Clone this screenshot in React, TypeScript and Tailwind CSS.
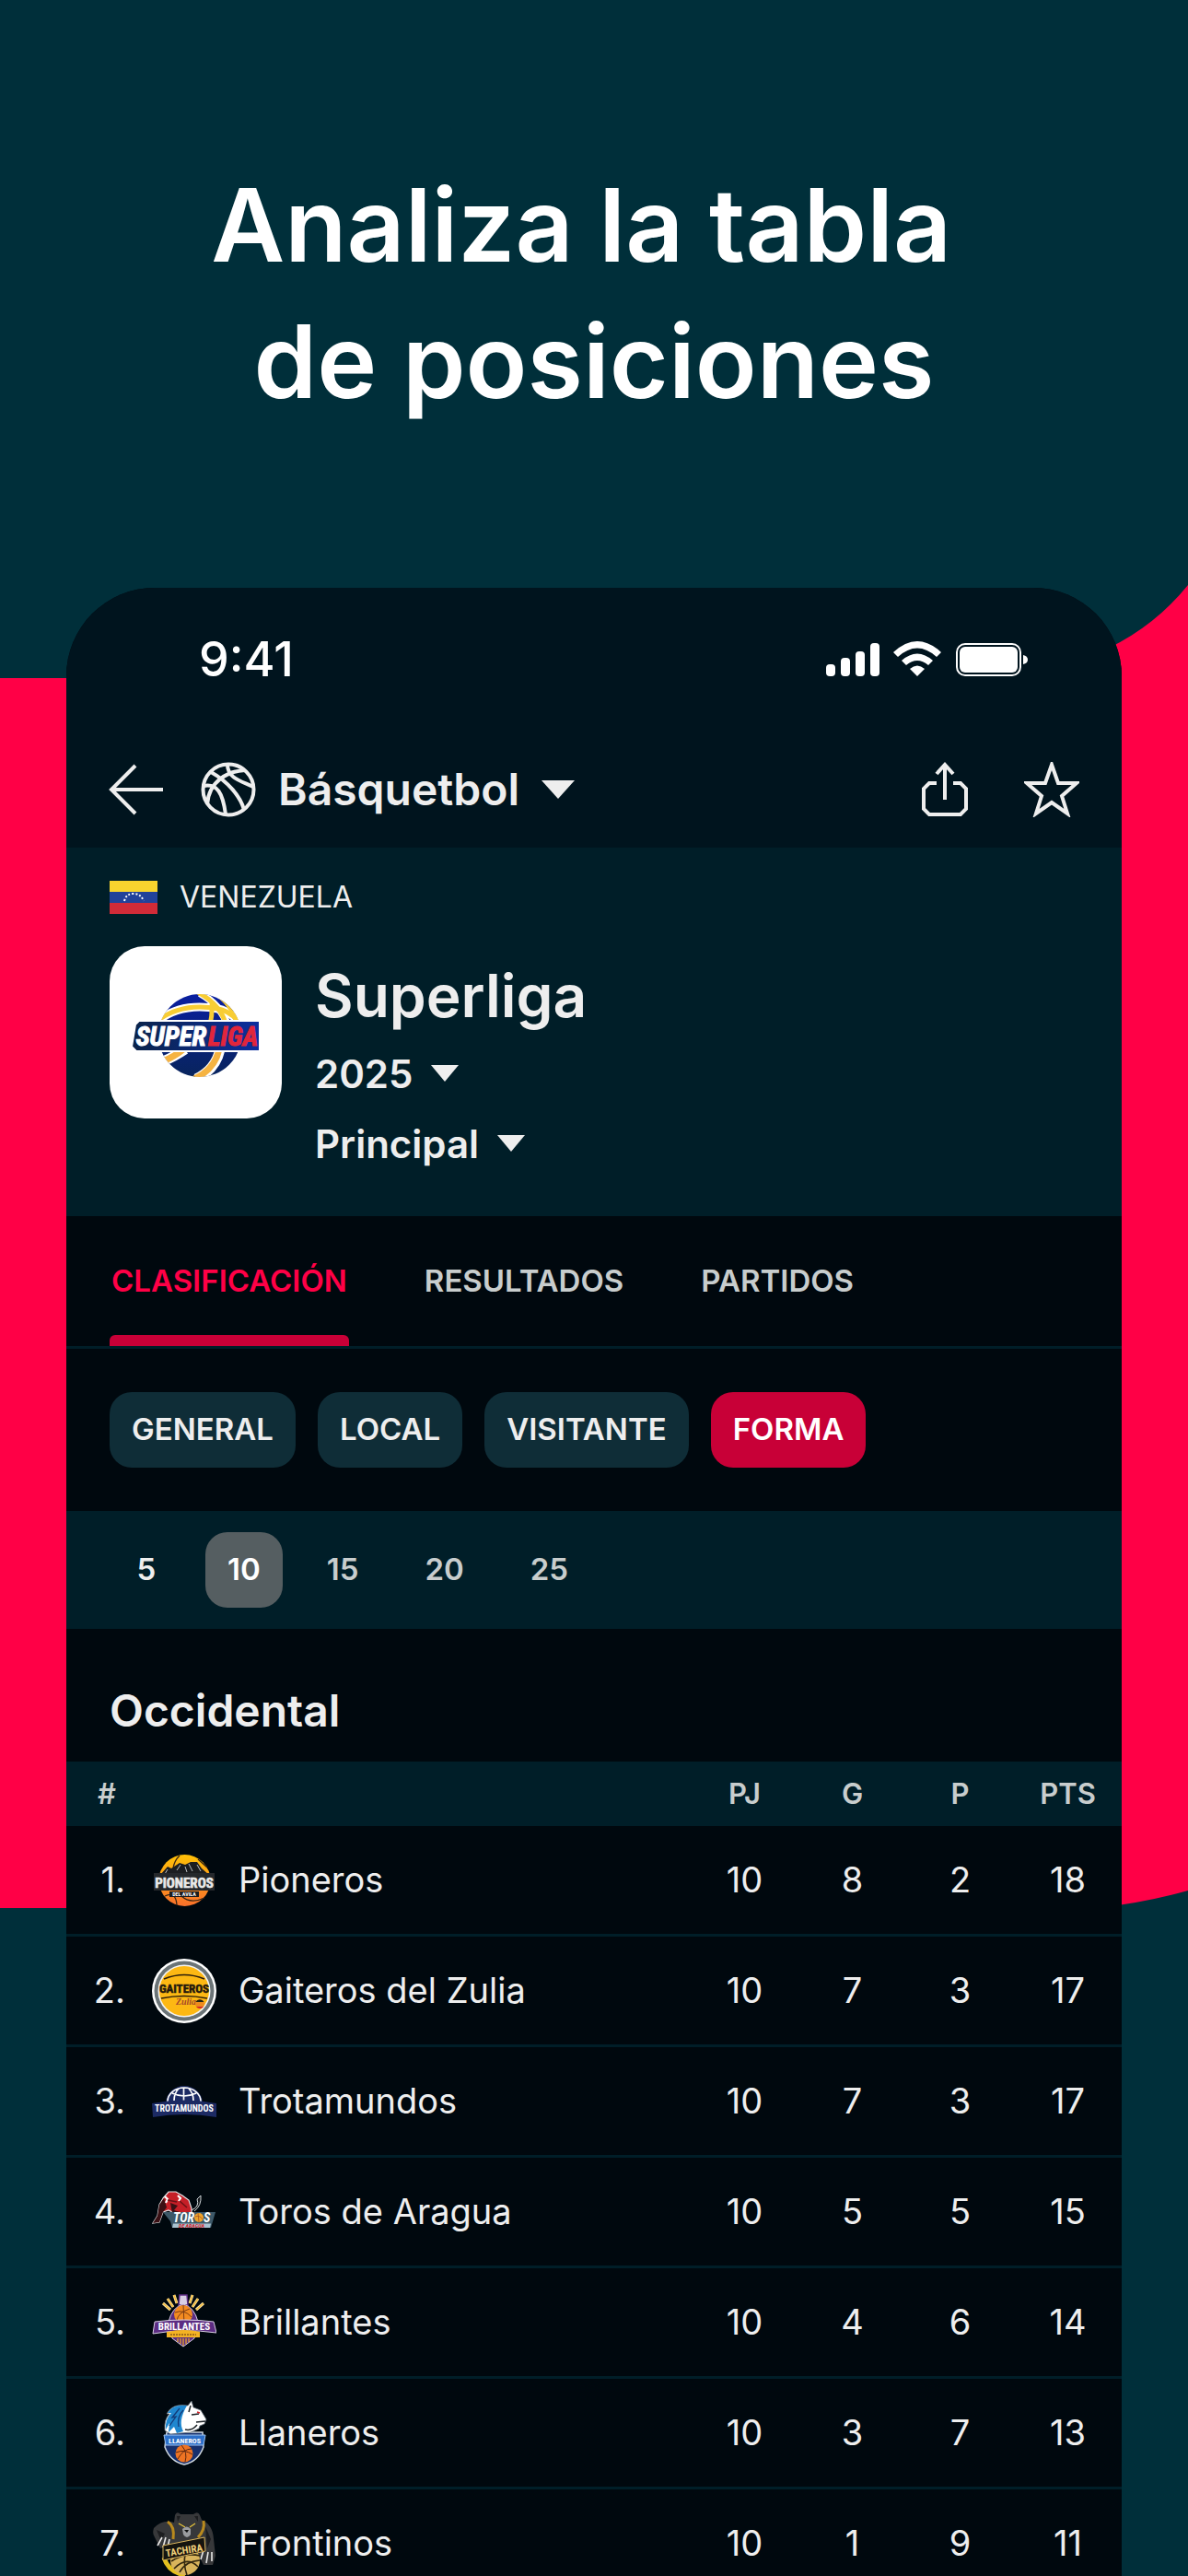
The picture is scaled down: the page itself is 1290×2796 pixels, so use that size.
import React, { useState } from 'react';
import clsx from 'clsx';

interface Team {
    name: string;
    played: number;
    won: number;
    lost: number;
    points: number;
    Logo: () => React.JSX.Element;
}

const LOGO_FONT = '"Liberation Sans Narrow", "Roboto Condensed", "Liberation Sans", sans-serif';

const TABS = ['Clasificación', 'Resultados', 'Partidos'];
const FILTERS = ['General', 'Local', 'Visitante', 'Forma'];
const PERIODS = [5, 10, 15, 20, 25];

function SuperligaLogo() {
    return (
        <svg viewBox="0 0 187 187" className="size-full" aria-label="Superliga">
            <defs>
                <linearGradient id="superBall" x1="0" y1="0" x2="0" y2="1">
                    <stop offset="0" stopColor="#0a1fa0" />
                    <stop offset="1" stopColor="#08245c" />
                </linearGradient>
                <linearGradient id="superBanner" x1="0" y1="0" x2="1" y2="0">
                    <stop offset="0" stopColor="#0b2348" />
                    <stop offset="1" stopColor="#0c2ea0" />
                </linearGradient>
                <clipPath id="superClip">
                    <circle cx="98" cy="97" r="45" />
                </clipPath>
            </defs>
            <circle cx="98" cy="97" r="45" fill="url(#superBall)" />
            <g clipPath="url(#superClip)" fill="none">
                <path d="M52 81C70 67 92 63 118 68 128 70 136 76 144 86" stroke="#fff" strokeWidth="9" />
                <path d="M98 51C114 60 124 72 129 88" stroke="#fff" strokeWidth="8" />
                <path d="M52 81C70 67 92 63 118 68 128 70 136 76 144 86" stroke="#f8cd34" strokeWidth="5" />
                <path d="M96 50C114 60 124 72 127 88M112 49C126 58 134 68 138 84M111 60Q112 72 109 86" stroke="#f8cd34" strokeWidth="5" />
                <path d="M60 124Q70 120 82 112M120 112Q115 134 94 144" stroke="#fff" strokeWidth="11" />
                <path d="M58 125Q70 120 80 112M119 112Q114 134 92 144" stroke="#f5b342" strokeWidth="7" />
            </g>
            <path d="M32 81H163V114H29L24 109 28 85Z" fill="url(#superBanner)" stroke="#fff" strokeWidth="2" />
            <g fontFamily={LOGO_FONT} fontSize="29" fontWeight="700" fontStyle="italic">
                <text x="105" y="108" textAnchor="end" fill="#fff" stroke="#fff" strokeWidth="1">SUPER</text>
                <text x="107" y="108" fill="#e0263c" stroke="#e0263c" strokeWidth="1">LIGA</text>
            </g>
        </svg>
    );
}

function PionerosLogo() {
    return (
        <svg viewBox="0 0 70 70" className="size-[70px]">
            <defs>
                <linearGradient id="pioBall" x1="0" y1="0" x2="0" y2="1">
                    <stop offset="0" stopColor="#ffc107" />
                    <stop offset="1" stopColor="#f9702b" />
                </linearGradient>
            </defs>
            <circle cx="35.5" cy="35" r="28" fill="url(#pioBall)" />
            <path d="M30 8Q24 14 23 22M50 12 60 21M14 52Q26 46 27 62M32 52Q42 61 57 54" stroke="#3a2513" strokeWidth="1.3" fill="none" />
            <path d="M9 29 17 20 21 22 30 16 36 18 42 15 49 15 54 22 62 29Z" fill="#1b1d20" />
            <path d="M17 23 14 28M31 18 27 24M40 17 44 25M49 18 53 25M36 20 38 26" stroke="#b9bdc1" strokeWidth="1" />
            <path d="M2 27H68V46H2Z" fill="#25282c" />
            <text x="35" y="43" textAnchor="middle" fontFamily={LOGO_FONT} fontSize="15" fontWeight="700" fill="#e9e9e9" stroke="#e9e9e9" strokeWidth=".6">PIONEROS</text>
            <path d="M19 47H51V53H19Z" fill="#1b1d20" />
            <text x="35" y="52" textAnchor="middle" fontFamily={LOGO_FONT} fontSize="6" fontWeight="700" fill="#fff">DEL AVILA</text>
        </svg>
    );
}

function GaiterosLogo() {
    return (
        <svg viewBox="0 0 70 70" className="size-[70px]">
            <circle cx="35" cy="35" r="35" fill="#fff" />
            <circle cx="35" cy="35" r="32.5" fill="#6b7477" />
            <circle cx="35" cy="35" r="28.5" fill="#f4f4f4" />
            <circle cx="35" cy="35" r="27" fill="#fdb813" />
            <path d="M10 43Q35 38 60 43" stroke="#2b1d0a" strokeWidth="1.5" fill="none" />
            <path d="M13 22Q35 13 57 22" stroke="#2b1d0a" strokeWidth="1.5" fill="none" />
            <text x="35" y="37" textAnchor="middle" fontFamily={LOGO_FONT} fontSize="13" fontWeight="700" fill="#24190d" stroke="#24190d" strokeWidth=".5">GAITEROS</text>
            <text x="37" y="50" textAnchor="middle" fontFamily='"Liberation Serif", serif' fontStyle="italic" fontSize="10" fontWeight="700" fill="#a5482a">Zulia</text>
            <circle cx="52" cy="49" r="5" fill="#ef8b1d" />
            <path d="M47.500 47A5 5 0 0 1 56.500 47Z" fill="#1f2414" />
            <path d="M48 52A5 5 0 0 0 56 52Z" fill="#d2232a" />
        </svg>
    );
}

function TrotamundosLogo() {
    return (
        <svg viewBox="0 0 70 70" className="size-[70px]">
            <path d="M15 37A20 19 0 0 1 55 37Z" fill="#1c2a63" />
            <path d="M17 35A18 15 0 0 1 53 35M34.500 20V34M24 34Q24 26 29 21M45 34Q45 26 40 21M22 26Q35 32 48 26" stroke="#fff" strokeWidth="1.700" fill="none" />
            <path d="M0 37Q35 30 70 37L70 52Q35 46 1 52Z" fill="#1c2a63" />
            <text x="35" y="46" textAnchor="middle" fontFamily={LOGO_FONT} fontSize="10" fontWeight="700" fill="#fff">TROTAMUNDOS</text>
        </svg>
    );
}

function TorosLogo() {
    return (
        <svg viewBox="0 0 70 70" className="size-[70px]">
            <path d="M43 33Q52 29 49 21L53 17Q54 28 46 34" fill="#14181b" stroke="#cfd5d8" strokeWidth="1" />
            <path d="M12 20 18 13 26 13 33 17 40 22 43 31 43 37 26 37 18 33 12 35 8 46 1 47 6 39 8 27Z" fill="#c51f27" stroke="#e3e6e8" strokeWidth="1.200" />
            <path d="M8 27 6 39 1 47 8 46 12 35 16 30 13 20ZM20 25 28 28 24 33 30 35 22 36Z" fill="#3a1014" />
            <path d="M14 18 17 21 15 25M28 17 31 20 29 23" stroke="#fff" strokeWidth="2.200" fill="none" />
            <path d="M17 22 27 24M30 23 38 30" stroke="#6b1116" strokeWidth="1.500" />
            <path d="M12 35H69L64 52H22L20 45Z" fill="#3d5868" />
            <g fontFamily={LOGO_FONT} fontSize="14" fontWeight="700" fontStyle="italic" fill="#fff">
                <text x="46" y="46" textAnchor="end">TOR</text>
                <text x="56" y="46">S</text>
            </g>
            <circle cx="51" cy="41" r="5" fill="#f0a32a" />
            <path d="M47 40Q52 38 55 43M50 36 51 46" stroke="#a8551c" strokeWidth=".8" fill="none" />
            <path d="M23 47.500H64L63 52H22Z" fill="#a9c2d0" />
            <text x="43" y="52" textAnchor="middle" fontFamily={LOGO_FONT} fontSize="6" fontWeight="700" fontStyle="italic" fill="#d2232a">DE ARAGUA</text>
        </svg>
    );
}

function BrillantesLogo() {
    return (
        <svg viewBox="0 0 70 70" className="size-[70px]">
            <path d="M12 14 20 21M17 9 23 18M24 5 27 14M56 14 48 21M50 9 44 18M44 5 41 14" stroke="#fce9b0" strokeWidth="3" />
            <path d="M12 14 20 21M17 9 23 18M24 5 27 14M56 14 48 21M50 9 44 18M44 5 41 14" stroke="#f4bb3c" strokeWidth="1.600" />
            <path d="M30 5H38L39 16H29Z" fill="#d8cfe4" stroke="#5c2d83" strokeWidth="1.500" />
            <path d="M18 34Q22 18 34 15 46 18 50 34L46 52 34 61 22 52Z" fill="#5c2d83" stroke="#d8cfe4" strokeWidth="1" />
            <circle cx="34" cy="26" r="10" fill="#f38b20" />
            <path d="M25 24Q35 20 43 29M34 16 35 36M27 33Q28 24 41 20" stroke="#7a3b15" strokeWidth="1" fill="none" />
            <path d="M3 34Q35 30 67 34L70 46Q35 41 1 47Z" fill="#5c2d83" stroke="#d8cfe4" strokeWidth="1" />
            <path d="M16 45Q35 41 52 45V51H16Z" fill="#f4b223" />
            <text x="35" y="43" textAnchor="middle" fontFamily={LOGO_FONT} fontSize="11" fontWeight="700" fill="#fff">BRILLANTES</text>
            <path d="M20 48H48" stroke="#8a5a18" strokeWidth="1.500" strokeDasharray="2 1" />
            <path d="M28 52V56M31 52V58M34 52V60M37 52V58M40 52V56" stroke="#f4b223" strokeWidth="1.200" />
        </svg>
    );
}

function LlanerosLogo() {
    return (
        <svg viewBox="0 0 70 70" className="size-[70px]">
            <path d="M16 34 55 34 56 50Q50 66 35 69 20 66 14 50Z" fill="#16306e" stroke="#cdd6de" strokeWidth="1.500" />
            <path d="M43 0 39 5Q22 2 16 14L19 14Q13 20 14 32L20 36 42 34 51 30 52 27 57 25 59 20 53 10 45 7Z" fill="#fff" stroke="#5b6670" strokeWidth=".8" />
            <path d="M38 5Q23 3 17 13L21 13Q14 20 15 31L19 24 18 34 24 28 27 35 34 33Q28 22 38 5Z" fill="#1f87cf" />
            <path d="M30 8 22 18 26 17 19 27M34 10Q27 17 29 28" stroke="#133a78" strokeWidth="1.300" fill="none" />
            <path d="M43 15 51 14M48 23 58 22M42 5 40 12M36 31Q43 33 49 26" stroke="#1b2126" strokeWidth="1.500" fill="none" />
            <path d="M49 12 52 13" stroke="#d2232a" strokeWidth="1.500" />
            <path d="M13 37H58L56 48H15Z" fill="#2c6fc9" stroke="#9ec3ee" strokeWidth="1" />
            <text x="35.500" y="46" textAnchor="middle" fontFamily={LOGO_FONT} fontSize="8" fontWeight="700" fill="#fff">LLANEROS</text>
            <circle cx="35" cy="57" r="9.500" fill="#ef7423" />
            <path d="M26 56Q35 52 44 58M32 48Q39 56 36 66M28 63Q34 52 43 52" stroke="#5b2712" strokeWidth="1" fill="none" />
        </svg>
    );
}

function FrontinosLogo() {
    return (
        <svg viewBox="0 0 70 70" className="size-[70px]">
            <path d="M25 4Q27-1 31 3L45 3Q50-1 52 4L54 9Q66 14 67 30L69 48 66 58 56 58 50 46 20 46 18 38 9 40 3 28Q0 24 2 18 12 8 24 12Z" fill="#37383a" />
            <path d="M27 5 31 5 28 11ZM46 5 50 5 50 11ZM5 20 14 24 10 32M58 16 64 30 60 40" fill="#1c1d1f" />
            <path d="M17 11Q25 16 23 30M56 10Q58 20 50 28" stroke="#b98a1d" strokeWidth="3" fill="none" />
            <path d="M29 13 36 17M47 13 41 17" stroke="#e8c53a" strokeWidth="1.200" />
            <path d="M33 19Q38 14 42 19L42 25Q38 31 34 25Z" fill="#9a9c9f" />
            <path d="M35 20H40L38 23Z" fill="#0d0e0f" />
            <path d="M11 28 6 37M15 28 12 39M19 30 17 39M56 42 53 52M61 44 59 56M65 44 65 54" stroke="#e8e8e8" strokeWidth="1.600" />
            <path d="M13 50Q18 66 36 69" stroke="#e3c01e" strokeWidth="5" fill="none" />
            <circle cx="36" cy="53" r="16" fill="#d9b45c" />
            <path d="M21 54Q36 44 52 48M24 62Q38 48 50 60M36 46Q34 58 38 69M30 66Q36 54 52 53" stroke="#33270f" strokeWidth="1.600" fill="none" />
            <path d="M12 37 57 28 58 43 12 53Z" fill="#15140f" stroke="#d9b45c" strokeWidth="1" />
            <g transform="rotate(-9 35 43)">
                <text x="35" y="46" textAnchor="middle" fontFamily={LOGO_FONT} fontSize="11" fontWeight="700" fill="#f0d07a">TACHIRA</text>
            </g>
        </svg>
    );
}

const TEAMS: Team[] = [
    { name: 'Pioneros', played: 10, won: 8, lost: 2, points: 18, Logo: PionerosLogo },
    { name: 'Gaiteros del Zulia', played: 10, won: 7, lost: 3, points: 17, Logo: GaiterosLogo },
    { name: 'Trotamundos', played: 10, won: 7, lost: 3, points: 17, Logo: TrotamundosLogo },
    { name: 'Toros de Aragua', played: 10, won: 5, lost: 5, points: 15, Logo: TorosLogo },
    { name: 'Brillantes', played: 10, won: 4, lost: 6, points: 14, Logo: BrillantesLogo },
    { name: 'Llaneros', played: 10, won: 3, lost: 7, points: 13, Logo: LlanerosLogo },
    { name: 'Frontinos', played: 10, won: 1, lost: 9, points: 11, Logo: FrontinosLogo },
];

function Backdrop() {
    return (
        <svg viewBox="0 0 1290 2796" preserveAspectRatio="none" className="absolute inset-0 size-full" aria-hidden="true">
            <path d="M0 736H1050Q1210 734 1290 635V2052Q1240 2066 1190 2071H0Z" fill="#ff0046" />
        </svg>
    );
}

function StatusBar() {
    return (
        <div className="flex h-[156px] items-center justify-between pr-[102px] pl-[144px] text-white">
            <span className="text-[52px] font-medium">9:41</span>
            <svg viewBox="0 0 220 40" className="h-10 w-[220px]" fill="#fff" aria-hidden="true">
                <rect x="1" y="25" width="10" height="13" rx="4" />
                <rect x="17" y="18" width="10" height="20" rx="4" />
                <rect x="33" y="11" width="10" height="27" rx="4" />
                <rect x="49" y="2" width="10" height="36" rx="4" />
                <path d="M74 12Q100-12 126 12L121 17Q100-2 79 17Z" />
                <path d="M83 21Q100 6 117 21L112 26Q100 16 88 26Z" />
                <path d="M92 30Q100 23 108 30L100 38Z" />
                <rect x="143" y="3" width="69" height="34" rx="9" fill="none" stroke="#fff" strokeWidth="2" />
                <rect x="146" y="6" width="63" height="28" rx="6" />
                <path d="M215 15Q220 16 220 20T215 25Z" />
            </svg>
        </div>
    );
}

function BasketballIcon() {
    return (
        <svg viewBox="0 0 60 60" className="size-[60px]" fill="none" stroke="currentColor" strokeWidth="4" aria-hidden="true">
            <circle cx="30" cy="30" r="27.500" />
            <path d="M11 11C29 21 43 37 47 52" />
            <path d="M29 3C29 18 45 21 57 27" />
            <path d="M48 9C30 10 9 20 7 46" />
            <path d="M3 26C18 23 24 34 27 57" />
        </svg>
    );
}

function Dropdown({ label, options, size }: { label: string; options: string[]; size: 'md' | 'lg' }) {
    return (
        <span className={clsx('flex items-center', size === 'lg' ? 'ml-6 gap-6' : 'gap-5')}>
            <select
                aria-label={label}
                className={clsx(
                    'appearance-none field-sizing-content bg-transparent font-semibold',
                    size === 'lg' ? 'text-[48px]' : 'text-[42px]'
                )}
            >
                {options.map(o => <option key={o}>{o}</option>)}
            </select>
            <svg viewBox="0 0 36 20" className={size === 'lg' ? 'h-5 w-9' : 'h-[18px] w-[30px]'} preserveAspectRatio="none" aria-hidden="true">
                <path d="M0 0H36L18 20Z" fill="#eeeeee" />
            </svg>
        </span>
    );
}

function AppBar() {
    return (
        <div className="flex h-[126px] items-center justify-between px-[46px] text-[#eeeeee]">
            <div className="flex items-center gap-10">
                <button aria-label="Volver">
                    <svg viewBox="0 0 60 60" className="size-[60px]" fill="none" stroke="currentColor" strokeWidth="4" aria-hidden="true">
                        <path d="M59 30H3M29 4 3 30 29 56" />
                    </svg>
                </button>
                <div className="flex items-center">
                    <BasketballIcon />
                    <Dropdown label="Deporte" options={['Básquetbol']} size="lg" />
                </div>
            </div>
            <div className="flex items-center gap-14">
                <button aria-label="Compartir">
                    <svg viewBox="0 0 60 60" className="size-[60px]" fill="none" stroke="currentColor" strokeWidth="4" aria-hidden="true">
                        <path d="M30 41V4M21 13 30 3 39 13M21 23H13L7 29V51L13 57H47L53 51V29L47 23H39" />
                    </svg>
                </button>
                <button aria-label="Favorito">
                    <svg viewBox="0 0 60 60" className="size-[60px]" fill="none" stroke="currentColor" strokeWidth="4" aria-hidden="true">
                        <path d="M30 3 37 23H57L41 37 47 56 30 44 13 56 19 37 3 23H23Z" />
                    </svg>
                </button>
            </div>
        </div>
    );
}

function LeagueHeader() {
    return (
        <section className="h-[400px] bg-[#001e28] px-[47px] pt-9 text-[#eeeeee]">
            <div className="flex items-center gap-6">
                <svg viewBox="0 0 52 36" className="h-9 w-[52px]" aria-hidden="true">
                    <rect width="52" height="12" fill="#f8d42e" />
                    <rect y="12" width="52" height="12" fill="#22429a" />
                    <rect y="24" width="52" height="12" fill="#d22b38" />
                    <path d="M16 22Q18 14 26 14 34 14 37 22" stroke="#fff" strokeWidth="2" strokeDasharray="2 2" fill="none" />
                </svg>
                <span className="text-[32px] leading-9">VENEZUELA</span>
            </div>
            <div className="mt-[35px] flex gap-9">
                <div className="size-[187px] shrink-0 overflow-hidden rounded-[38px] bg-white">
                    <SuperligaLogo />
                </div>
                <div className="pt-[14px]">
                    <h2 className="text-[64px] leading-[80px] font-semibold">Superliga</h2>
                    <div className="flex h-[76px] items-center pt-3">
                        <Dropdown label="Temporada" options={['2025']} size="md" />
                    </div>
                    <div className="flex h-[76px] items-center pt-3">
                        <Dropdown label="Fase" options={['Principal']} size="md" />
                    </div>
                </div>
            </div>
        </section>
    );
}

function Standings() {
    return (
        <table className="w-full table-fixed border-separate border-spacing-0 text-[#eeeeee]">
            <thead>
                <tr className="h-[70px] bg-[#001e28] text-[31px] text-[#c8cdcd]">
                    <th className="w-[93px] pl-[34px] text-left font-semibold">#</th>
                    <th aria-label="Equipo" />
                    <th className="w-[117px] font-semibold">PJ</th>
                    <th className="w-[117px] font-semibold">G</th>
                    <th className="w-[117px] font-semibold">P</th>
                    <th className="w-[117px] font-semibold">PTS</th>
                </tr>
            </thead>
            <tbody>
                {TEAMS.map((team, i) => (
                    <tr key={team.name} className="h-[120px] text-center text-[38px] [&>td]:border-b-3 [&>td]:border-[#001e28]">
                        <td className="pr-[29px] text-right">{i + 1}.</td>
                        <td>
                            <div className="flex items-center gap-6">
                                <team.Logo />
                                <span>{team.name}</span>
                            </div>
                        </td>
                        <td>{team.played}</td>
                        <td>{team.won}</td>
                        <td>{team.lost}</td>
                        <td>{team.points}</td>
                    </tr>
                ))}
            </tbody>
        </table>
    );
}

function App() {
    const [tab, setTab] = useState('Clasificación');
    const [filter, setFilter] = useState('Forma');
    const [period, setPeriod] = useState(10);

    return (
        <div className="relative h-screen overflow-hidden bg-[#002f3a] font-['Inter',sans-serif]">
            <Backdrop />
            <div className="relative">
                <header className="h-[638px] pt-[170px] text-center">
                    <h1 className="text-[110px] leading-[148px] font-semibold text-white">
                        Analiza la tabla&nbsp;
                        <br />
                        de posiciones
                    </h1>
                </header>
                <main className="mx-[72px] overflow-hidden rounded-t-[96px] bg-[#00080e]">
                    <div className="bg-[#00141e]">
                        <StatusBar />
                        <AppBar />
                    </div>
                    <LeagueHeader />
                    <nav className="flex h-36 gap-20 border-b-3 border-[#001e28] px-[47px]">
                        {TABS.map(t => (
                            <button
                                key={t}
                                onClick={() => setTab(t)}
                                className={clsx(
                                    'relative px-0.5 text-[33px] font-semibold uppercase',
                                    t === tab ? 'text-[#ff0046]' : 'text-[#c8cdcd]'
                                )}
                            >
                                {t}
                                {t === tab && <span className="absolute inset-x-0 bottom-0 h-3 rounded-t-md bg-[#c80037]" />}
                            </button>
                        ))}
                    </nav>
                    <div className="flex h-44 items-center gap-6 px-[47px]">
                        {FILTERS.map(f => (
                            <button
                                key={f}
                                onClick={() => setFilter(f)}
                                className={clsx(
                                    'h-[82px] rounded-3xl px-6 text-[33px] font-semibold uppercase',
                                    f === filter ? 'bg-[#c80037] text-white' : 'bg-[#0f2d37] text-[#eeeeee]'
                                )}
                            >
                                {f}
                            </button>
                        ))}
                    </div>
                    <div className="flex h-32 items-center gap-6 bg-[#001e28] px-[47px]">
                        {PERIODS.map(p => (
                            <button
                                key={p}
                                onClick={() => setPeriod(p)}
                                className={clsx(
                                    'h-[82px] min-w-20 rounded-3xl px-6 text-[33px] font-semibold',
                                    p === period && 'bg-[#555e61] text-white',
                                    p < period && 'text-[#eeeeee]',
                                    p > period && 'text-[#c8cdcd]'
                                )}
                            >
                                {p}
                            </button>
                        ))}
                    </div>
                    <h3 className="flex h-36 items-end px-[47px] pb-[26px] text-[48px] leading-[58px] font-semibold text-[#eeeeee]">Occidental</h3>
                    <Standings />
                </main>
            </div>
        </div>
    );
}

export default App;
